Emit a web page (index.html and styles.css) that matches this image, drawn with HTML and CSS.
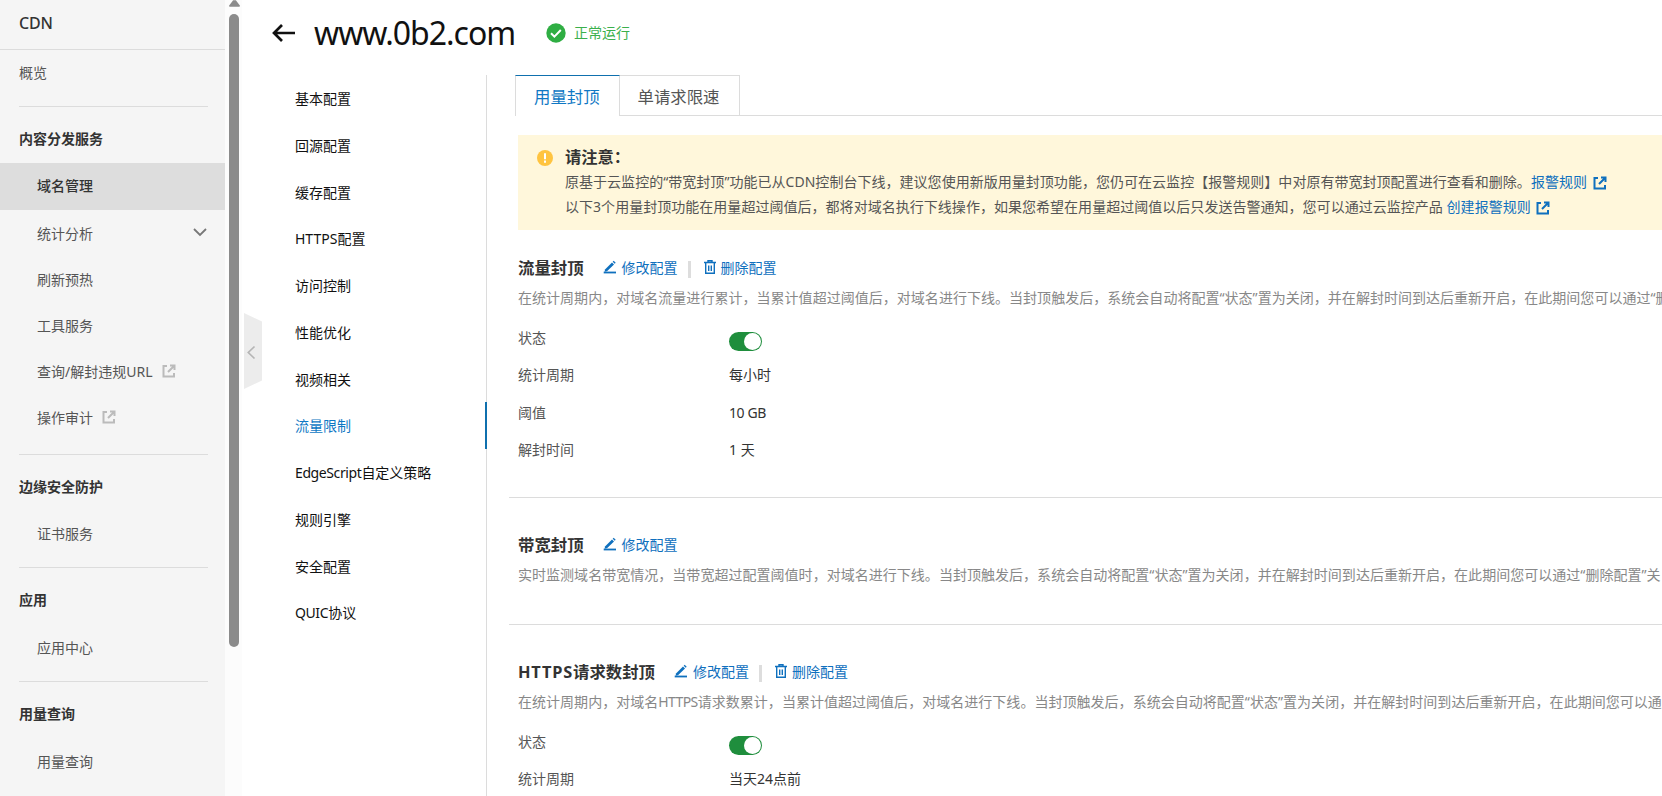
FILE: index.html
```html
<!DOCTYPE html>
<html lang="zh-CN">
<head>
  <meta charset="UTF-8" />
  <meta name="viewport" content="width=device-width, initial-scale=1.0"/>
  <title>CDN 域名管理</title>
  <link rel="stylesheet" href="styles.css">
</head>
<body>

  <!-- shared icons -->
  <svg class="sprite">
    <symbol id="i-link" viewBox="0 0 14 14">
      <path d="M5 2H1.500v10.500H12V9M8 1.500h4.500V6M12 2L6 8" fill="none" stroke="currentColor" stroke-width="2"/>
    </symbol>
    <symbol id="i-edit" viewBox="0 0 14 14">
      <path d="M2 9.500L9 2.500l2 2L4 11.300l-2.400.5z" fill="currentColor"/>
      <path d="M9.700 1.800L10.700.8l2 2-1 1z" fill="currentColor"/>
      <path d="M.7 12.500h12.300" stroke="currentColor" stroke-width="1.800"/>
    </symbol>
    <symbol id="i-trash" viewBox="0 0 12 14">
      <path d="M0 2.500h12M4 2.200V.8h4v1.400M1.700 3v10.200h8.600V3M4.700 5.500v5.500M7.300 5.500v5.500" fill="none" stroke="currentColor" stroke-width="1.400"/>
    </symbol>
  </svg>

  <div class="page">
    <div class="sidebar">
      <div class="product">CDN</div>
      <div class="overview">概览</div>
      <div class="group group-main">
        <div class="group-title">内容分发服务</div>
        <div class="item active">域名管理</div>
        <div class="item">统计分析
          <svg class="chevron" viewBox="0 0 14 9"><path d="M1 1l6 6 6-6" fill="none" stroke="#777" stroke-width="1.8"/></svg>
        </div>
        <div class="item">刷新预热</div>
        <div class="item">工具服务</div>
        <div class="item">查询/解封违规URL <svg class="icon-link"><use href="#i-link"/></svg></div>
        <div class="item">操作审计 <svg class="icon-link"><use href="#i-link"/></svg></div>
      </div>
      <div class="group">
        <div class="group-title">边缘安全防护</div>
        <div class="item">证书服务</div>
      </div>
      <div class="group">
        <div class="group-title">应用</div>
        <div class="item">应用中心</div>
      </div>
      <div class="group">
        <div class="group-title">用量查询</div>
        <div class="item">用量查询</div>
      </div>
    </div>

    <div class="scrollbar">
      <svg class="scroll-up" viewBox="0 0 12 7"><path d="M4.500 0h3L12 6q0 1-1 1H1Q0 7 0 6z" fill="#8b8b8b"/></svg>
      <div class="thumb"></div>
    </div>

    <div class="collapse">
      <svg viewBox="0 0 18 76"><path d="M0 0l18 8.500v59L0 76z" fill="#ececec"/><path d="M10.500 33.500L4.300 39.500l6.200 6" fill="none" stroke="#b5b5b5" stroke-width="1.700"/></svg>
    </div>

    <div class="main">
      <div class="header">
        <svg class="back" viewBox="0 0 24 18"><path d="M23 9H2M10 1L2 9l8 8" fill="none" stroke="#111" stroke-width="2.700"/></svg>
        <h1>www.0b2.com</h1>
        <svg class="ok" viewBox="0 0 20 20"><circle cx="10" cy="10" r="9.700" fill="#2fae43"/><path d="M5 10.200l3.400 3.400L14.800 7" fill="none" stroke="#fff" stroke-width="2"/></svg>
        <span class="running">正常运行</span>
      </div>

      <div class="body">
        <div class="subnav">
          <div class="subitem">基本配置</div>
          <div class="subitem">回源配置</div>
          <div class="subitem">缓存配置</div>
          <div class="subitem">HTTPS配置</div>
          <div class="subitem">访问控制</div>
          <div class="subitem">性能优化</div>
          <div class="subitem">视频相关</div>
          <div class="subitem current">流量限制</div>
          <div class="subitem"><span class="tight">EdgeScript</span>自定义策略</div>
          <div class="subitem">规则引擎</div>
          <div class="subitem">安全配置</div>
          <div class="subitem"><span class="tight">QUIC</span>协议</div>
        </div>

        <div class="content">
          <div class="tabs">
            <div class="tab selected">用量封顶</div>
            <div class="tab">单请求限速</div>
            <div class="tab-rest"></div>
          </div>

          <div class="notice">
            <svg class="warn" viewBox="0 0 16 16"><circle cx="8" cy="8" r="8" fill="#ffc440"/><path d="M8 3.300v5.900M8 10.600v2.200" stroke="#fff" stroke-width="2"/></svg>
            <div class="notice-text">
              <div class="notice-title">请注意：</div>
              <div class="notice-line">原基于云监控的“带宽封顶”功能已从CDN控制台下线，建议您使用新版用量封顶功能，您仍可在云监控【报警规则】中对原有带宽封顶配置进行查看和删除。<a>报警规则 <svg class="icon-link"><use href="#i-link"/></svg></a></div>
              <div class="notice-line">以下3个用量封顶功能在用量超过阈值后，都将对域名执行下线操作，如果您希望在用量超过阈值以后只发送告警通知，您可以通过云监控产品 <a>创建报警规则 <svg class="icon-link"><use href="#i-link"/></svg></a></div>
            </div>
          </div>

          <div class="section">
            <div class="section-head">
              <h2>流量封顶</h2>
              <a class="action"><svg class="edit"><use href="#i-edit"/></svg>修改配置</a>
              <span class="bar"></span>
              <a class="action"><svg class="trash"><use href="#i-trash"/></svg>删除配置</a>
            </div>
            <div class="desc">在统计周期内，对域名流量进行累计，当累计值超过阈值后，对域名进行下线。当封顶触发后，系统会自动将配置“状态”置为关闭，并在解封时间到达后重新开启，在此期间您可以通过“删</div>
            <div class="row"><span class="label">状态</span><span class="switch"></span></div>
            <div class="row"><span class="label">统计周期</span><span>每小时</span></div>
            <div class="row"><span class="label">阈值</span><span class="tight">10 GB</span></div>
            <div class="row"><span class="label">解封时间</span><span>1 天</span></div>
          </div>

          <div class="section">
            <div class="section-head">
              <h2>带宽封顶</h2>
              <a class="action"><svg class="edit"><use href="#i-edit"/></svg>修改配置</a>
            </div>
            <div class="desc">实时监测域名带宽情况，当带宽超过配置阈值时，对域名进行下线。当封顶触发后，系统会自动将配置“状态”置为关闭，并在解封时间到达后重新开启，在此期间您可以通过“删除配置”关</div>
          </div>

          <div class="section">
            <div class="section-head">
              <h2><span class="wide">HTTPS</span>请求数封顶</h2>
              <a class="action"><svg class="edit"><use href="#i-edit"/></svg>修改配置</a>
              <span class="bar"></span>
              <a class="action"><svg class="trash"><use href="#i-trash"/></svg>删除配置</a>
            </div>
            <div class="desc">在统计周期内，对域名<span class="tight">HTTPS</span>请求数累计，当累计值超过阈值后，对域名进行下线。当封顶触发后，系统会自动将配置“状态”置为关闭，并在解封时间到达后重新开启，在此期间您可以通</div>
            <div class="row"><span class="label">状态</span><span class="switch"></span></div>
            <div class="row"><span class="label">统计周期</span><span>当天24点前</span></div>
          </div>
        </div>
      </div>
    </div>
  </div>

</body>
</html>
```
FILE: styles.css
```css
* {
  box-sizing: border-box;
}
html, body {
  margin: 0;
  padding: 0;
  height: 100%;
  overflow: hidden;
}
body {
  font-family: "Noto Sans", "Noto Sans CJK SC", sans-serif;
  font-size: 14px;
  color: #333;
  background: #fff;
  white-space: nowrap;
  text-spacing-trim: space-all;
}
svg {
  flex: none;
}
.sprite {
  display: none;
}
.tight {
  letter-spacing: -0.4px;
}
.wide {
  letter-spacing: 0.8px;
}
.page {
  display: flex;
  height: 100vh;
  overflow: hidden;
}

/* left menu */
.sidebar {
  width: 225px;
  flex: none;
  background: #f5f5f5;
  color: #555;
}
.product {
  height: 50px;
  padding-left: 19px;
  line-height: 46px;
  font-size: 16px;
  font-weight: 500;
  letter-spacing: -0.2px;
  color: #333;
  border-bottom: 1px solid #dcdcdc;
}
.overview {
  height: 56px;
  padding-left: 19px;
  line-height: 46px;
}
.group {
  padding-bottom: 11px;
}
.group::before {
  content: "";
  display: block;
  height: 1px;
  margin: 0 17px 9px 19px;
  background: #dcdcdc;
}
.group-title {
  height: 46.5px;
  padding-left: 19px;
  line-height: 46px;
  font-weight: bold;
  color: #333;
}
.item {
  display: flex;
  align-items: center;
  height: 46.3px;
  padding: 0 18px 0 37px;
}
.group-main {
  padding-bottom: 14px;
}
.group-main .item {
  height: 46px;
}
.group-main .item.active {
  height: 47px;
  padding-bottom: 2px;
  background: #ddd;
  color: #333;
  font-weight: 500;
}
.item .icon-link {
  margin-left: 9px;
  color: #bbb;
}
.icon-link {
  width: 14px;
  height: 14px;
}
.chevron {
  width: 14px;
  height: 9px;
  margin-left: auto;
}

.scrollbar {
  width: 17px;
  flex: none;
  padding-left: 4px;
  background: #fcfcfc;
}
.scroll-up {
  display: block;
  width: 11px;
  height: 7px;
}
.thumb {
  width: 10px;
  height: 633px;
  margin-top: 7px;
  border-radius: 5px;
  background: #8b8b8b;
}
.collapse {
  width: 20px;
  flex: none;
  padding: 313px 0 0 2px;
}
.collapse svg {
  display: block;
  width: 18px;
  height: 76px;
}

/* right side */
.main {
  flex: 1;
  min-width: 0;
}
.header {
  display: flex;
  align-items: center;
  height: 75px;
  padding: 0 0 9px 10px;
}
.back {
  width: 24px;
  height: 18px;
}
h1 {
  width: 214px;
  margin: 0 18px 0 18px;
  font-size: 32px;
  line-height: 44px;
  font-weight: normal;
  letter-spacing: -1px;
  color: #111;
}
.ok {
  width: 20px;
  height: 20px;
}
.running {
  margin-left: 8px;
  padding-bottom: 3px;
  color: #3bb04c;
}
.body {
  display: flex;
  height: 721px;
}
.subnav {
  width: 225px;
  flex: none;
  border-right: 1px solid #dcdcdc;
  color: #111;
}
.subitem {
  height: 46.75px;
  padding-left: 33px;
  line-height: 47px;
}
.subitem.current {
  margin-right: -1px;
  border-right: 2px solid #0f70ae;
  color: #0f78c4;
}
.content {
  flex: 1;
  min-width: 0;
  padding-left: 22px;
}
.tabs {
  display: flex;
  height: 41px;
  margin-left: 6px;
  font-size: 16.4px;
}
.tab {
  padding: 0 19px 0 18px;
  line-height: 41px;
  border: 1px solid #dcdcdc;
  border-left: 0;
  color: #555;
}
.tab.selected {
  border-left: 1px solid #dcdcdc;
  border-top-color: #0f70ae;
  border-bottom: 0;
  color: #0f78c4;
}
.tab-rest {
  flex: 1;
  border-bottom: 1px solid #dcdcdc;
}
.notice {
  display: flex;
  height: 95px;
  margin: 19px 0 0 9px;
  padding: 10px 0 0 19px;
  background: #fff7db;
}
.warn {
  width: 16px;
  height: 16px;
  margin-top: 5px;
}
.notice-text {
  margin-left: 12px;
  color: #555;
}
.notice-title {
  height: 24px;
  line-height: 25px;
  font-size: 16.3px;
  font-weight: bold;
  color: #333;
}
.notice-line {
  height: 25px;
  line-height: 25px;
  letter-spacing: 0.03px;
}
a {
  color: #0f70be;
}
.notice-line .icon-link {
  margin-left: 2px;
  vertical-align: -3px;
}

.section {
  height: 127px;
  padding: 34px 0 0 9px;
  border-bottom: 1px solid #dcdcdc;
}
.notice + .section {
  height: 268px;
  padding-top: 25px;
}
.section:last-child {
  height: auto;
  border-bottom: 0;
}
.section-head {
  display: flex;
  align-items: center;
  height: 26px;
}
h2 {
  margin: 0 19px 0 0;
  font-size: 16.4px;
  line-height: 26px;
  font-weight: bold;
}
.action {
  display: flex;
  align-items: center;
  padding-bottom: 3px;
}
.edit {
  width: 14px;
  height: 14px;
  margin-right: 5px;
}
.trash {
  width: 12px;
  height: 14px;
  margin-right: 5px;
}
.bar {
  width: 3px;
  height: 17px;
  margin: 2px 13px 0 10px;
  background: #ddd;
}
.desc {
  height: 34px;
  line-height: 34px;
  letter-spacing: 0.03px;
  color: #888;
}
.desc .tight {
  letter-spacing: -0.6px;
}
.row {
  display: flex;
  height: 37.3px;
  line-height: 37px;
}
.desc + .row {
  margin-top: 4px;
}
.label {
  width: 211px;
  color: #555;
}
.switch {
  width: 33px;
  height: 19px;
  margin-top: 13px;
  padding: 1px;
  border-radius: 10px;
  background: #1f8e3d;
}
.switch::before {
  content: "";
  display: block;
  width: 17px;
  height: 17px;
  margin-left: auto;
  border-radius: 50%;
  background: #fff;
}
```
